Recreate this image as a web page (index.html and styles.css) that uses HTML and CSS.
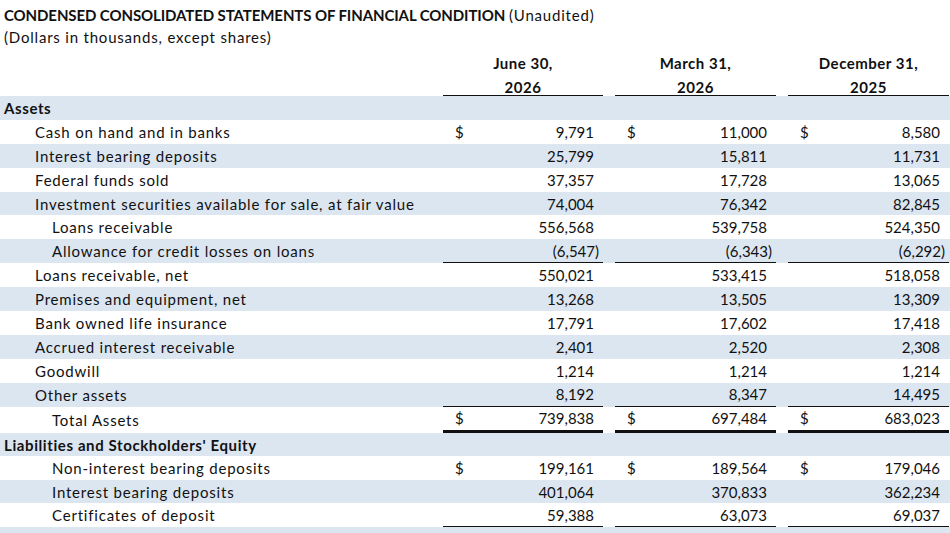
FILE: index.html
```html
<!DOCTYPE html>
<html>
<head>
<meta charset="utf-8">
<link rel="stylesheet" href="styles.css">
</head>
<body>
<div class="sheet">
  <div class="titles">
    <div class="title"><b>CONDENSED CONSOLIDATED STATEMENTS OF FINANCIAL CONDITION</b> <span class="reg">(Unaudited)</span></div>
    <div class="subtitle">(Dollars in thousands, except shares)</div>
  </div>
  <div class="row head">
    <div class="label"></div>
    <div class="hcell">June 30,<br>2026</div>
    <div class="hcell">March 31,<br>2026</div>
    <div class="hcell">December 31,<br>2025</div>
  </div>

  <div class="row band"><div class="label sec">Assets</div><div class="cell"></div><div class="cell"></div><div class="cell"></div></div>
  <div class="row"><div class="label i1">Cash on hand and in banks</div><div class="cell"><span>$</span><span>9,791</span></div><div class="cell"><span>$</span><span>11,000</span></div><div class="cell"><span>$</span><span>8,580</span></div></div>
  <div class="row band"><div class="label i1">Interest bearing deposits</div><div class="cell"><span></span><span>25,799</span></div><div class="cell"><span></span><span>15,811</span></div><div class="cell"><span></span><span>11,731</span></div></div>
  <div class="row"><div class="label i1">Federal funds sold</div><div class="cell"><span></span><span>37,357</span></div><div class="cell"><span></span><span>17,728</span></div><div class="cell"><span></span><span>13,065</span></div></div>
  <div class="row band"><div class="label i1">Investment securities available for sale, at fair value</div><div class="cell"><span></span><span>74,004</span></div><div class="cell"><span></span><span>76,342</span></div><div class="cell"><span></span><span>82,845</span></div></div>
  <div class="row"><div class="label i2">Loans receivable</div><div class="cell"><span></span><span>556,568</span></div><div class="cell"><span></span><span>539,758</span></div><div class="cell"><span></span><span>524,350</span></div></div>
  <div class="row band"><div class="label i2">Allowance for credit losses on loans</div><div class="cell ul paren"><span></span><span>(6,547)</span></div><div class="cell ul paren"><span></span><span>(6,343)</span></div><div class="cell ul paren"><span></span><span>(6,292)</span></div></div>
  <div class="row"><div class="label i1">Loans receivable, net</div><div class="cell"><span></span><span>550,021</span></div><div class="cell"><span></span><span>533,415</span></div><div class="cell"><span></span><span>518,058</span></div></div>
  <div class="row band"><div class="label i1">Premises and equipment, net</div><div class="cell"><span></span><span>13,268</span></div><div class="cell"><span></span><span>13,505</span></div><div class="cell"><span></span><span>13,309</span></div></div>
  <div class="row"><div class="label i1">Bank owned life insurance</div><div class="cell"><span></span><span>17,791</span></div><div class="cell"><span></span><span>17,602</span></div><div class="cell"><span></span><span>17,418</span></div></div>
  <div class="row band"><div class="label i1">Accrued interest receivable</div><div class="cell"><span></span><span>2,401</span></div><div class="cell"><span></span><span>2,520</span></div><div class="cell"><span></span><span>2,308</span></div></div>
  <div class="row"><div class="label i1">Goodwill</div><div class="cell"><span></span><span>1,214</span></div><div class="cell"><span></span><span>1,214</span></div><div class="cell"><span></span><span>1,214</span></div></div>
  <div class="row band"><div class="label i1">Other assets</div><div class="cell ul"><span></span><span>8,192</span></div><div class="cell ul"><span></span><span>8,347</span></div><div class="cell ul"><span></span><span>14,495</span></div></div>
  <div class="row total"><div class="label i2">Total Assets</div><div class="cell dul"><span>$</span><span>739,838</span></div><div class="cell dul"><span>$</span><span>697,484</span></div><div class="cell dul"><span>$</span><span>683,023</span></div></div>

  <div class="row band tight"><div class="label sec">Liabilities and Stockholders' Equity</div><div class="cell"></div><div class="cell"></div><div class="cell"></div></div>
  <div class="row tight"><div class="label i2">Non-interest bearing deposits</div><div class="cell"><span>$</span><span>199,161</span></div><div class="cell"><span>$</span><span>189,564</span></div><div class="cell"><span>$</span><span>179,046</span></div></div>
  <div class="row band tight"><div class="label i2">Interest bearing deposits</div><div class="cell"><span></span><span>401,064</span></div><div class="cell"><span></span><span>370,833</span></div><div class="cell"><span></span><span>362,234</span></div></div>
  <div class="row tight"><div class="label i2">Certificates of deposit</div><div class="cell ul"><span></span><span>59,388</span></div><div class="cell ul"><span></span><span>63,073</span></div><div class="cell ul"><span></span><span>69,037</span></div></div>
  <div class="row band tight"><div class="label i2">Total deposits</div><div class="cell"><span></span><span>659,613</span></div><div class="cell"><span></span><span>623,470</span></div><div class="cell"><span></span><span>610,317</span></div></div>
</div>
</body>
</html>
```

FILE: styles.css
```css
html, body {
  margin: 0;
  padding: 0;
  background: #ffffff;
  overflow: hidden;
}

.sheet {
  width: 950px;
  height: 533px;
  overflow: hidden;
  font-family: Lato, "Liberation Sans", sans-serif;
  font-size: 15px;
  color: #111111;
}

.titles {
  height: 51px;
  padding: 4px 0 0 4px;
  box-sizing: border-box;
}

.title, .subtitle {
  line-height: 22px;
  white-space: nowrap;
}

.title b {
  font-weight: 700;
  letter-spacing: -0.1px;
}

.title .reg,
.subtitle {
  letter-spacing: 0.8px;
}

.row {
  display: grid;
  grid-template-columns: 431px 160px 161px 161px;
  column-gap: 12px;
  height: 23.9px;
}

.row.total {
  height: 26.4px;
}

.row.tight {
  height: 23.5px;
}

.row.band {
  background: #dce6f1;
}

.row.head {
  height: 45px;
}

.hcell {
  font-weight: 700;
  text-align: center;
  line-height: 24px;
  letter-spacing: 0.5px;
  border-bottom: 1px solid #111;
  box-sizing: border-box;
  height: 45px;
  white-space: nowrap;
}

.label {
  display: flex;
  align-items: center;
  white-space: nowrap;
  letter-spacing: 0.8px;
}

.label.sec {
  padding-left: 4px;
  font-weight: 700;
  letter-spacing: 0.6px;
}

.label.i1 {
  padding-left: 35px;
}

.label.i2 {
  padding-left: 52px;
}

.cell {
  display: flex;
  align-items: center;
  justify-content: space-between;
  padding: 0 9px 0 12px;
  box-sizing: border-box;
  white-space: nowrap;
}

.cell.paren {
  padding-right: 4px;
}

.cell.ul {
  border-bottom: 1px solid #111;
}

.cell.dul {
  border-bottom: 3px solid #111;
}
```
